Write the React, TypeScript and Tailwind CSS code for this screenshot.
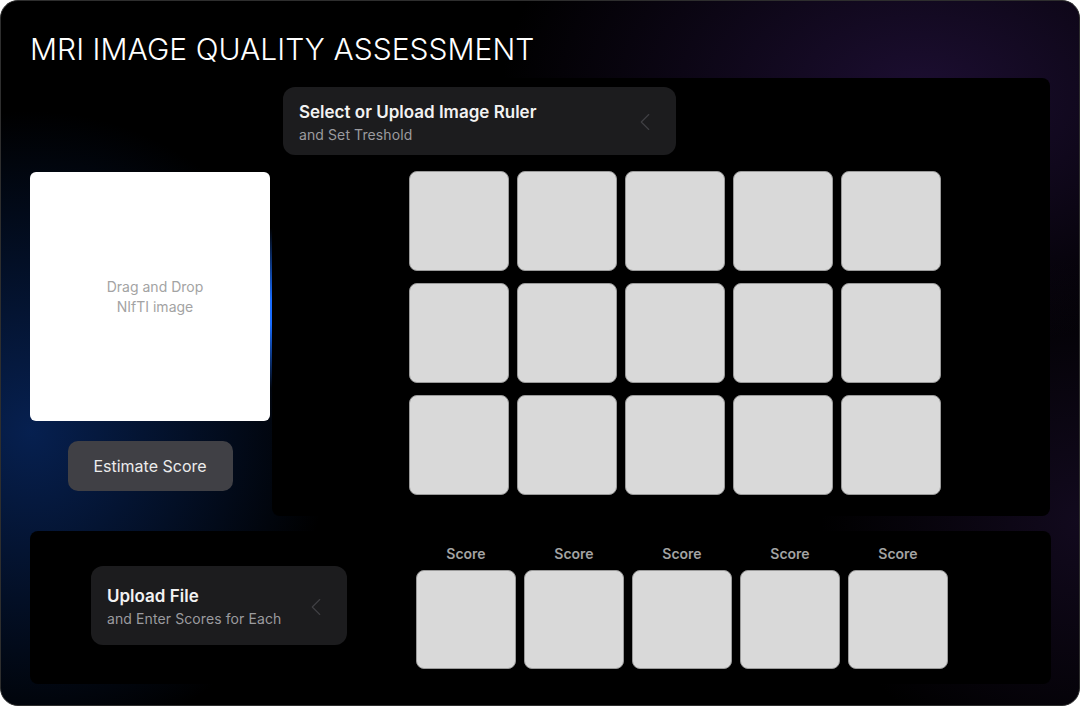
import { ChevronLeft } from 'lucide-react';

const rows = [0, 1, 2];
const cols = [0, 1, 2, 3, 4];

function StepCard({ title, subtitle, className }: { title: string; subtitle: string; className: string }) {
  return (
    <div className={`flex items-center justify-between rounded-xl bg-[#1c1c1e] ${className}`}>
      <div className="flex flex-col">
        <span className="text-[17px] font-semibold leading-[22px] text-[#f2f2f2]">{title}</span>
        <span className="mt-[3px] text-[14px] leading-[18px] tracking-[0.1px] text-[#9b9b9f]">{subtitle}</span>
      </div>
      <ChevronLeft size={30} strokeWidth={0.9} className="text-[#404044]" />
    </div>
  );
}

function Tile({ tall }: { tall?: boolean }) {
  return (
    <div
      className={`w-[100px] rounded-lg border border-[#9a9a9a] bg-[#d9d9d9] ${tall ? 'h-[99px]' : 'h-[100px]'}`}
    />
  );
}

export default function App() {
  return (
    <div className="h-[706px] w-[1080px] bg-white font-['Inter','Liberation_Sans',sans-serif]">
      <div className="flex h-full w-full flex-col overflow-hidden rounded-[18px] border border-[#2e2e2e] bg-black bg-[radial-gradient(ellipse_300px_320px_at_30px_430px,rgba(8,40,100,0.8),transparent),radial-gradient(ellipse_420px_260px_at_920px_90px,rgba(40,20,70,0.7),transparent),radial-gradient(ellipse_260px_260px_at_1080px_520px,rgba(30,16,50,0.6),transparent)]">
        <h1 className="ml-[29px] mt-[30px] text-[30px] font-light leading-[36px] tracking-[0.05px] text-white">
          MRI IMAGE QUALITY ASSESSMENT
        </h1>

        <div className="ml-[29px] mt-[11px] flex">
          {/* left column */}
          <div className="flex w-[240px] flex-col items-center pt-[94px]">
            <div className="flex h-[249px] w-[240px] flex-col items-center justify-center rounded-md bg-white pl-[10px] text-[14px] leading-[20px] text-[#a3a3a3]">
              <span>Drag and Drop</span>
              <span>NIfTI image</span>
            </div>
            <button className="mt-[20px] h-[50px] w-[165px] rounded-[10px] bg-[#404045] text-[16px] text-[#ececec]">
              Estimate Score
            </button>
          </div>
          <div className="mt-[150px] h-[160px] w-[2px] bg-[linear-gradient(to_bottom,transparent,#1a6dff_45%,#1a6dff_60%,transparent)]" />

          {/* ruler panel */}
          <div className="flex h-[438px] w-[778px] flex-col rounded-lg bg-black pl-[11px] pt-[9px]">
            <StepCard
              title="Select or Upload Image Ruler"
              subtitle="and Set Treshold"
              className="h-[68px] w-[393px] pl-4 pr-[16px] pt-[2px]"
            />
            <div className="ml-[126px] mt-4 flex flex-col gap-[12px]">
              {rows.map((r) => (
                <div key={r} className="flex gap-2">
                  {cols.map((c) => (
                    <Tile key={c} />
                  ))}
                </div>
              ))}
            </div>
          </div>
        </div>

        {/* score panel */}
        <div className="ml-[29px] mt-[15px] flex h-[153px] w-[1021px] items-start rounded-lg bg-black">
          <StepCard
            title="Upload File"
            subtitle="and Enter Scores for Each"
            className="ml-[61px] mt-[35px] h-[79px] w-[256px] pl-4 pr-[16px] pt-[2px]"
          />
          <div className="ml-[69px] mt-[14px] flex gap-2">
            {cols.map((c) => (
              <div key={c} className="flex flex-col items-center">
                <span className="text-[14px] font-semibold leading-[18px] text-[#a3a3a3]">Score</span>
                <div className="mt-[7px]">
                  <Tile tall />
                </div>
              </div>
            ))}
          </div>
        </div>
      </div>
    </div>
  );
}
